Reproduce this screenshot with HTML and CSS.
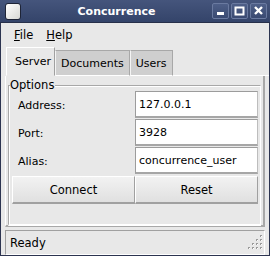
FILE: index.html
```html
<!DOCTYPE html>
<html>
<head>
<meta charset="utf-8">
<link rel="stylesheet" href="styles.css">
</head>
<body>
<div class="window">
  <div class="titlebar">
    <div class="app-icon"></div>
    <div class="title">Concurrence</div>
    <div class="wbtns">
      <div class="wbtn"><svg width="17" height="16" viewBox="0 0 17 16"><rect x="5" y="9" width="7" height="3" fill="#fff"/></svg></div>
      <div class="wbtn"><svg width="17" height="16" viewBox="0 0 17 16"><rect x="4.5" y="4.5" width="8" height="7" fill="none" stroke="#fff" stroke-width="2"/></svg></div>
      <div class="wbtn"><svg width="17" height="16" viewBox="0 0 17 16"><path d="M5 4 L12 11 M12 4 L5 11" stroke="#fff" stroke-width="2.4"/></svg></div>
    </div>
  </div>
  <div class="menubar">
    <span class="menu"><u>F</u>ile</span>
    <span class="menu"><u>H</u>elp</span>
  </div>
  <div class="tabs">
    <div class="tab active">Server</div>
    <div class="tab">Documents</div>
    <div class="tab">Users</div>
    <div class="tab-fill"></div>
  </div>
  <div class="panel">
    <div class="group">
      <div class="legend">Options</div>
      <div class="form">
        <label class="lbl">Address:</label><div class="field">127.0.0.1</div>
        <label class="lbl">Port:</label><div class="field">3928</div>
        <label class="lbl">Alias:</label><div class="field">concurrence_user</div>
      </div>
      <div class="buttons">
        <div class="btn">Connect</div>
        <div class="btn">Reset</div>
      </div>
    </div>
  </div>
  <div class="statusbar">
    <div class="status">Ready</div>
    <svg class="grip" width="22" height="22" viewBox="0 0 22 22">
      <g fill="#9a9a9a">
        <rect x="18" y="3" width="2" height="2"/>
        <rect x="14" y="7" width="2" height="2"/><rect x="18" y="7" width="2" height="2"/>
        <rect x="10" y="11" width="2" height="2"/><rect x="14" y="11" width="2" height="2"/><rect x="18" y="11" width="2" height="2"/>
        <rect x="6" y="15" width="2" height="2"/><rect x="10" y="15" width="2" height="2"/><rect x="14" y="15" width="2" height="2"/><rect x="18" y="15" width="2" height="2"/>
      </g>
      <g fill="#ffffff">
        <rect x="19" y="4" width="1" height="1"/>
        <rect x="15" y="8" width="1" height="1"/><rect x="19" y="8" width="1" height="1"/>
        <rect x="11" y="12" width="1" height="1"/><rect x="15" y="12" width="1" height="1"/><rect x="19" y="12" width="1" height="1"/>
        <rect x="7" y="16" width="1" height="1"/><rect x="11" y="16" width="1" height="1"/><rect x="15" y="16" width="1" height="1"/><rect x="19" y="16" width="1" height="1"/>
      </g>
    </svg>
  </div>
</div>
</body>
</html>
```

FILE: styles.css
```css
* { box-sizing: border-box; }
html, body { margin: 0; padding: 0; }
body {
  width: 270px;
  height: 256px;
  font-family: "DejaVu Sans", sans-serif;
  font-size: 11px;
  color: #000;
  overflow: hidden;
}
.window {
  width: 270px;
  height: 256px;
  background: #e8e8e8;
  border: 1px solid #2c3450;
  border-top: none;
  display: flex;
  flex-direction: column;
}
.titlebar {
  height: 23px;
  margin: 0 -1px;
  background: linear-gradient(#45557c, #34446a);
  display: flex;
  align-items: center;
  padding: 0 3px 0 5px;
  border-bottom: 1px solid #27304a;
}
.app-icon {
  width: 16px;
  height: 17px;
  border-radius: 3px;
  background: linear-gradient(135deg, #ffffff, #d8d8d4);
  border: 1px solid #1e2436;
}
.title {
  flex: 1;
  text-align: center;
  color: #fff;
  font-weight: bold;
  font-size: 11px;
}
.wbtns { display: flex; gap: 2px; }
.wbtn {
  width: 17px;
  height: 16px;
  border: 1px solid #6a7aa0;
  border-radius: 2px;
  background: linear-gradient(#4e5f88, #3a4a72);
  display: flex;
}
.wbtn svg { margin: -1px; }
.menubar {
  height: 22px;
  display: flex;
  align-items: center;
  padding: 2px 0 0 13px;
  gap: 13px;
  font-size: 11.5px;
}
.tabs {
  display: flex;
  margin-top: 2px;
  padding-left: 5px;
  height: 29px;
  align-items: flex-end;
}
.tab {
  height: 26px;
  padding: 0 5px;
  display: flex;
  align-items: center;
  font-size: 11px;
  background: #cfcfcf;
  border: 1px solid #a8a8a8;
  border-bottom: 1px solid #ffffff;
  border-left-color: #f4f4f4;
}
.tab.active {
  height: 29px;
  background: #e8e8e8;
  border-color: #ffffff #a0a0a0 transparent #ffffff;
  padding: 0 3px 0 8px;
}
.tab-fill {
  flex: 1;
  height: 29px;
  border-bottom: 1px solid #fff;
}
.panel {
  margin: 0 4px;
  height: 151px;
  border: 1px solid #ffffff;
  border-top: none;
  border-right: 2px solid #a8a8a8;
  border-bottom: 2px solid #a8a8a8;
  padding: 4px 2px 0 2px;
}
.group {
  position: relative;
  border: 1px solid #a8a8a8;
  border-right: 1px solid #ffffff;
  border-bottom: 2px solid #ffffff;
  margin-top: 5px;
  height: 141px;
  padding: 5px 3px 0 3px;
  box-shadow: inset 1px 1px 0 #ffffff;
}
.legend {
  position: absolute;
  left: 1px;
  top: -8px;
  background: #e8e8e8;
  font-size: 11.5px;
  line-height: 14px;
  padding: 0 1px 0 0;
}
.form {
  display: grid;
  grid-template-columns: 123px 123px;
  grid-auto-rows: 28px;
}
.lbl {
  font-size: 11px;
  display: flex;
  align-items: center;
  padding-left: 6px;
}
.field {
  background: #fff;
  border: 1px solid #9c9c9c;
  border-bottom: 2px solid #a6a6a6;
  border-right: 1px solid #bdbdbd;
  display: flex;
  align-items: center;
  padding-left: 3px;
  font-size: 11px;
  margin-bottom: 1px;
}
.buttons {
  display: grid;
  grid-template-columns: 123px 123px;
  margin-top: 1px;
}
.btn {
  height: 28px;
  background: linear-gradient(#f2f2f2, #e0e0e0);
  border: 1px solid #ffffff;
  border-right-color: #a0a0a0;
  border-bottom: 2px solid #a0a0a0;
  display: flex;
  align-items: center;
  justify-content: center;
  font-size: 11.5px;
}
.statusbar {
  margin: 3px 4px 0 4px;
  height: 25px;
  border: 1px solid #a0a0a0;
  border-right-color: #fff;
  border-bottom-color: #fff;
  display: flex;
  align-items: center;
  position: relative;
}
.status {
  padding-left: 4px;
  font-size: 11.5px;
}
.grip {
  position: absolute;
  right: 0;
  bottom: 0;
}
```
